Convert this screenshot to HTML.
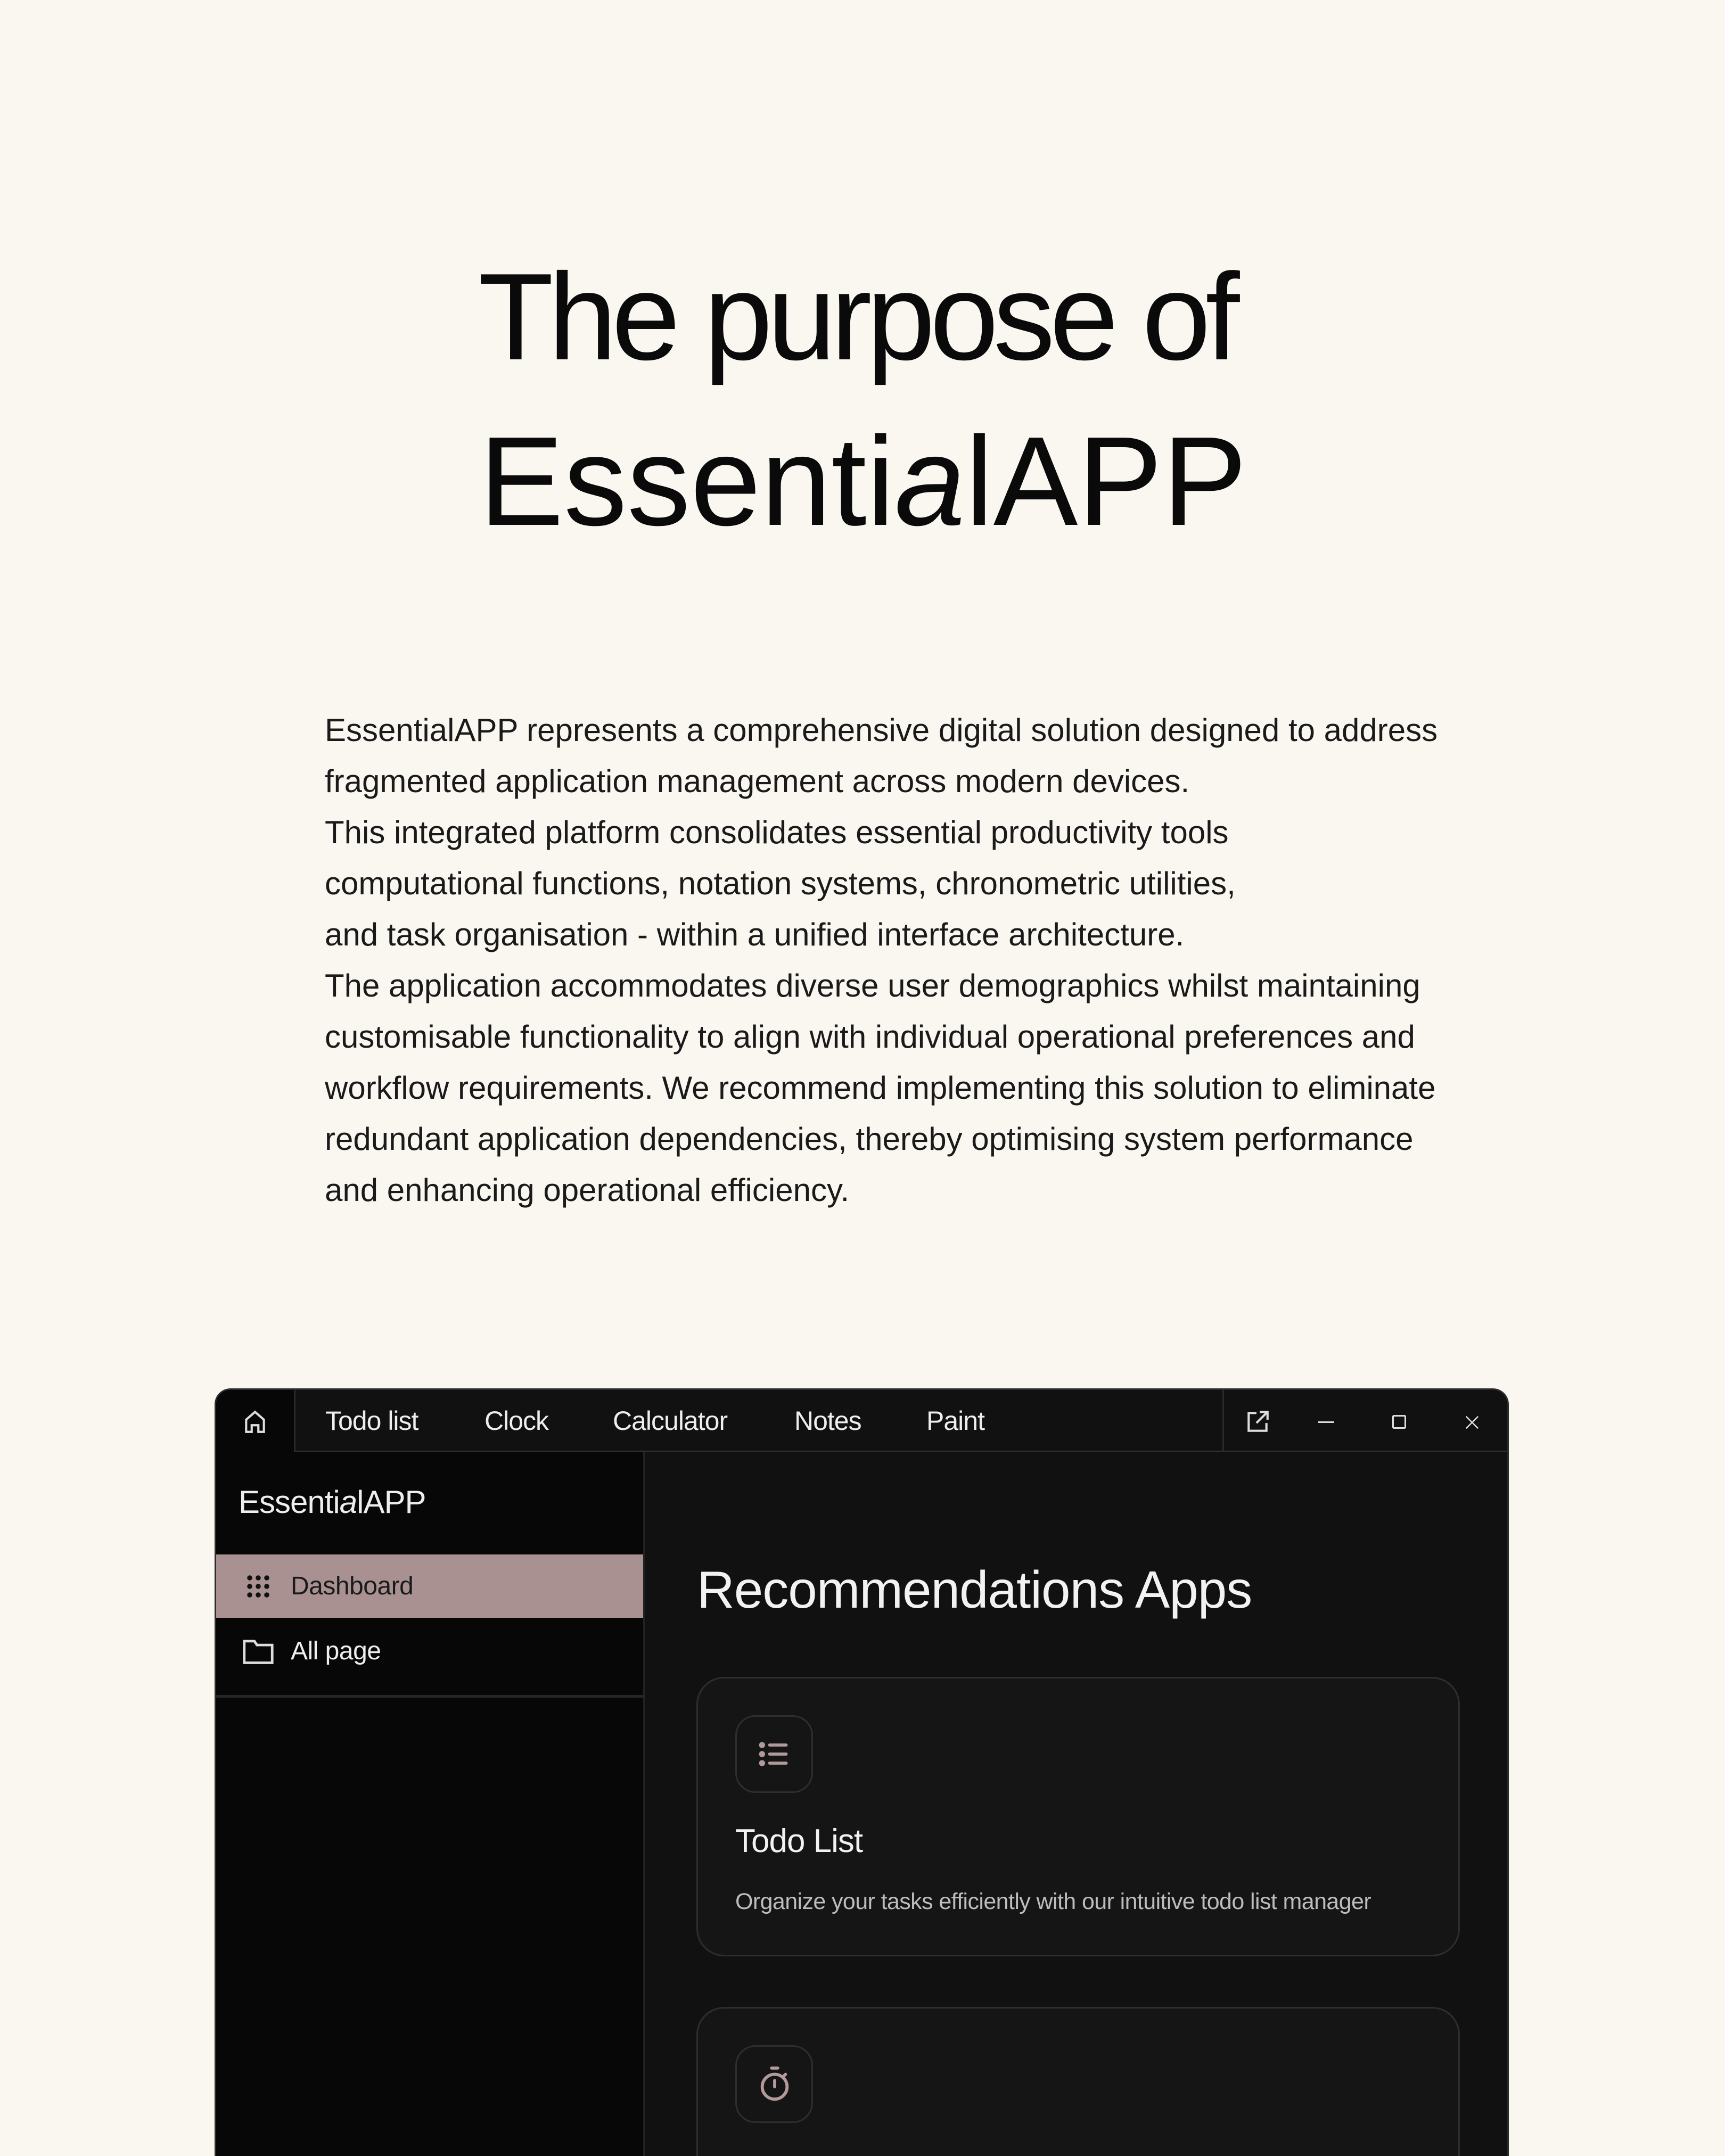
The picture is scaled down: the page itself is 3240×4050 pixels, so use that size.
<!DOCTYPE html>
<html><head><meta charset="utf-8"><style>
*{margin:0;padding:0;box-sizing:border-box}
body{width:3240px;height:4050px;background:#faf7f0;font-family:"Liberation Sans",sans-serif;position:relative;overflow:hidden;color:#111}
.t{position:absolute;white-space:nowrap;line-height:1}
.p{position:absolute;left:610px;top:1324px;font-size:60px;line-height:96px;letter-spacing:0px;color:#1a1a1a;white-space:nowrap}
.win{position:absolute;left:403px;top:2608px;width:2431px;height:1442px;background:#111;border:3px solid #2a2a2a;border-bottom:none;border-radius:30px 30px 0 0;overflow:hidden}
.tab{position:absolute;top:0;height:117px;line-height:117px;font-size:50px;color:#eee;letter-spacing:-1px}
.side{position:absolute;left:0;top:117px;width:805px;height:1400px;background:#070707;border-right:3px solid #222}
.card{position:absolute;left:902px;width:1434px;background:#151515;border:3px solid #2e2e2e;border-radius:52px}
.ib{position:absolute;left:70px;width:146px;height:146px;border:3px solid #2e2e2e;border-radius:38px}
</style></head><body>
<div class="t" style="left:898px;top:480px;font-size:232px;letter-spacing:-10px;color:#0a0a0a">The purpose of</div>
<div class="t" style="left:900px;top:786px;font-size:238px;letter-spacing:0px;color:#0a0a0a">Essenti<i>a</i>lAPP</div>
<div class="p">EssentialAPP represents a comprehensive digital solution designed to address<br>fragmented application management across modern devices.<br>This integrated platform consolidates essential productivity tools<br>computational functions, notation systems, chronometric utilities,<br>and task organisation - within a unified interface architecture.<br>The application accommodates diverse user demographics whilst maintaining<br>customisable functionality to align with individual operational preferences and<br>workflow requirements. We recommend implementing this solution to eliminate<br>redundant application dependencies, thereby optimising system performance<br>and enhancing operational efficiency.</div>

<div class="win">
  <div style="position:absolute;left:0;top:0;width:149px;height:117px;background:#070707;border-right:3px solid #2a2a2a"></div>
  <div style="position:absolute;left:149px;top:114px;right:0;height:3px;background:#2e2e2e"></div>
  <div style="position:absolute;left:1890px;top:0;width:3px;height:117px;background:#2a2a2a"></div>
  <svg style="position:absolute;left:48px;top:35px" width="50" height="50" viewBox="0 0 24 24" fill="none" stroke="#ddd" stroke-width="2"><path d="M4 21V10l8-7 8 7v11h-5v-6H9v6z"/></svg>
  <div class="tab" style="left:205px">Todo list</div>
  <div class="tab" style="left:504px">Clock</div>
  <div class="tab" style="left:745px">Calculator</div>
  <div class="tab" style="left:1086px">Notes</div>
  <div class="tab" style="left:1334px">Paint</div>
  <svg style="position:absolute;left:1931px;top:35px" width="50" height="50" viewBox="0 0 24 24" fill="none" stroke="#ddd" stroke-width="2"><path d="M11 4H4v16h16v-7M14 3h7v7M21 3L11 13"/></svg>
  <div style="position:absolute;left:2070px;top:59px;width:30px;height:3px;background:#ddd"></div>
  <div style="position:absolute;left:2209px;top:47px;width:26px;height:26px;border:3px solid #ddd;border-radius:3px"></div>
  <svg style="position:absolute;left:2344px;top:46px" width="30" height="30" viewBox="0 0 24 24" stroke="#ddd" stroke-width="2"><path d="M3 3l18 18M21 3L3 21"/></svg>

  <div class="side">
    <div class="t" style="left:42px;top:64px;font-size:60px;color:#eee;letter-spacing:-1px">Essenti<i>a</i>lAPP</div>
    <div style="position:absolute;left:0;top:192px;width:802px;height:119px;background:#a99192"></div>
    <svg style="position:absolute;left:55px;top:228px" width="48" height="48" viewBox="0 0 24 24" fill="#111"><circle cx="4" cy="4" r="2.4"/><circle cx="12" cy="4" r="2.4"/><circle cx="20" cy="4" r="2.4"/><circle cx="4" cy="12" r="2.4"/><circle cx="12" cy="12" r="2.4"/><circle cx="20" cy="12" r="2.4"/><circle cx="4" cy="20" r="2.4"/><circle cx="12" cy="20" r="2.4"/><circle cx="20" cy="20" r="2.4"/></svg>
    <div class="t" style="left:140px;top:228px;font-size:48px;color:#1a1a1a;letter-spacing:-0.5px">Dashboard</div>
    <svg style="position:absolute;left:48px;top:346px" width="62" height="56" viewBox="0 0 26 22" fill="none" stroke="#ddd" stroke-width="2"><path d="M2 3h8l2 3h12v14H2z"/></svg>
    <div class="t" style="left:140px;top:350px;font-size:48px;color:#eee;letter-spacing:-0.5px">All page</div>
    <div style="position:absolute;left:0;top:456px;width:805px;height:5px;background:#262626"></div>
  </div>

  <div class="t" style="left:903px;top:326px;font-size:98px;color:#f2f2f2;letter-spacing:-1px">Recommendations Apps</div>

  <div class="card" style="top:539px;height:525px">
    <div class="ib" style="top:69px">
      <svg style="position:absolute;left:36px;top:36px" width="68" height="68" viewBox="0 0 24 24" fill="none" stroke="#b39a9a" stroke-width="2" stroke-linecap="round"><path d="M9 6h11M9 12h11M9 18h11"/><circle cx="4" cy="6" r="1" fill="#b39a9a"/><circle cx="4" cy="12" r="1" fill="#b39a9a"/><circle cx="4" cy="18" r="1" fill="#b39a9a"/></svg>
    </div>
    <div class="t" style="left:70px;top:275px;font-size:62px;color:#f2f2f2;letter-spacing:-1px">Todo List</div>
    <div class="t" style="left:70px;top:398px;font-size:43px;color:#bdbdbd;letter-spacing:-0.6px">Organize your tasks efficiently with our intuitive todo list manager</div>
  </div>
  <div class="card" style="top:1159px;height:600px">
    <div class="ib" style="top:69px">
      <svg style="position:absolute;left:36px;top:34px" width="70" height="70" viewBox="0 0 24 24" fill="none" stroke="#b39a9a" stroke-width="2" stroke-linecap="round"><circle cx="12" cy="14" r="8"/><path d="M10 2h4M12 10v4M19 6l-1.5 1.5"/></svg>
    </div>
  </div>
</div>
</body></html>
